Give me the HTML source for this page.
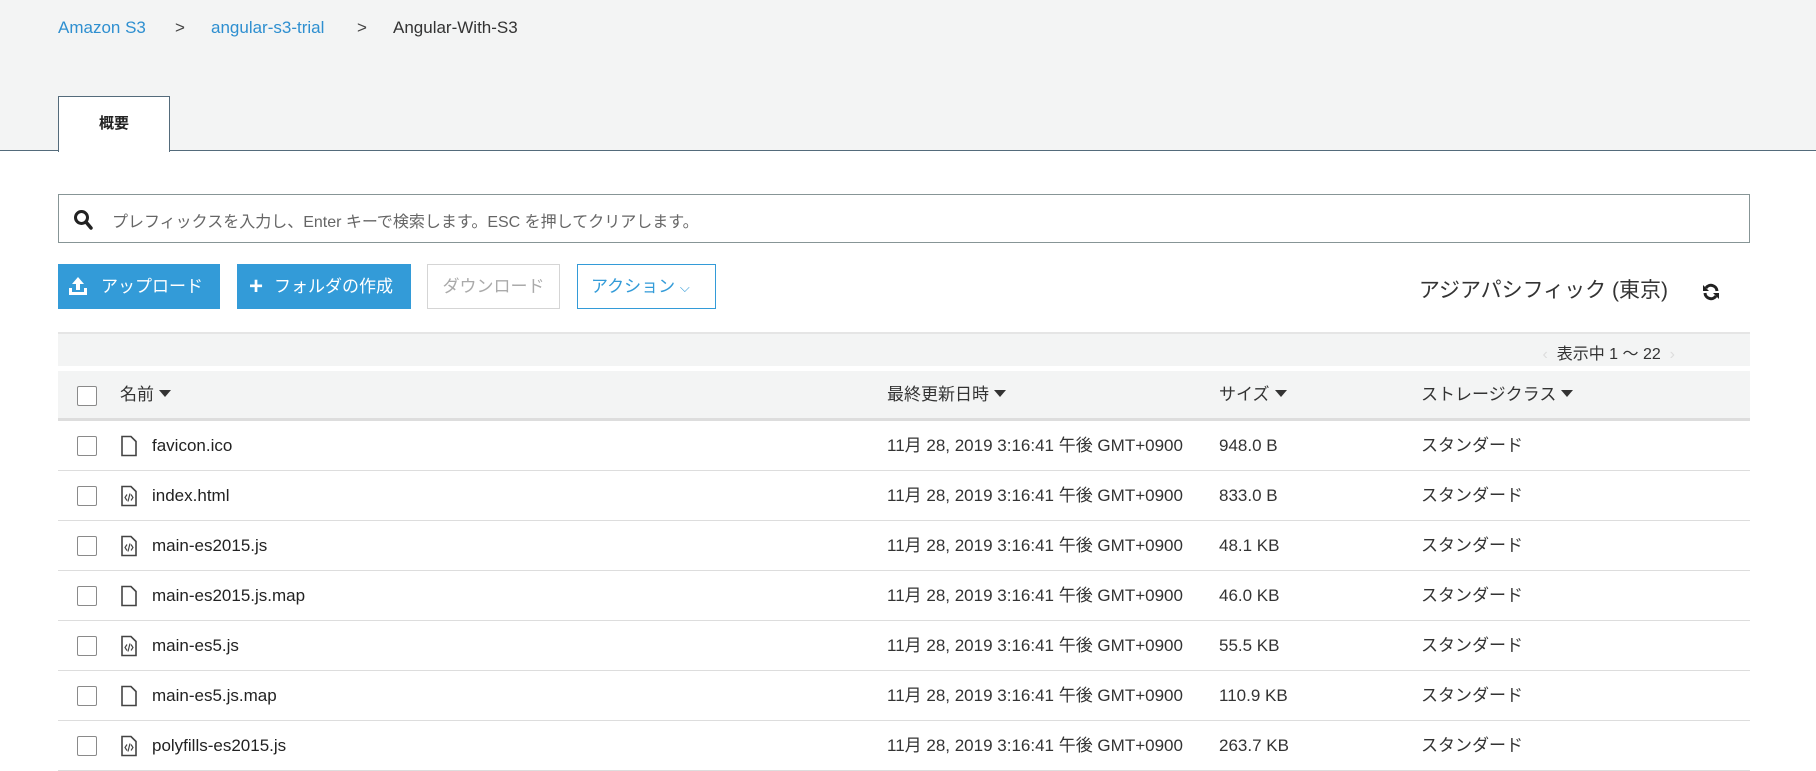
<!DOCTYPE html>
<html><head><meta charset="utf-8"><style>
*{box-sizing:border-box;margin:0;padding:0}
body{width:1816px;height:768px;overflow:hidden;background:#fff;font-family:"Liberation Sans","Noto Sans CJK JP",sans-serif;color:#333;position:relative}
.hdr{position:absolute;left:0;top:0;width:1816px;height:151px;background:#f3f4f4;border-bottom:1px solid #546b7b}
.a{position:absolute;white-space:nowrap}
.bc{font-size:17px;top:18px}
.tab{position:absolute;left:58px;top:96px;width:112px;height:56px;background:#fff;border:1px solid #546b7b;border-bottom:none;font-size:15px;font-weight:bold;text-align:center;line-height:54px;color:#222}
.search{position:absolute;left:58px;top:194px;width:1692px;height:49px;border:1px solid #879596}
.btn{position:absolute;top:264px;height:45px;font-size:17px;line-height:45px;white-space:nowrap}
.blue{background:#339bd8;color:#fff}
.pager{position:absolute;left:58px;top:332px;width:1692px;height:34px;background:#f3f4f4;border-top:2px solid #e5e5e5}
.th{position:absolute;left:58px;top:371px;width:1692px;height:50px;background:#f3f4f4;border-bottom:3px solid #ddd}
.row{position:absolute;left:58px;width:1692px;height:50px;border-bottom:1px solid #ddd;font-size:17px}
.cb{position:absolute;left:19px;top:15px;width:20px;height:20px;border:1px solid #8a8a8a;border-radius:2px;background:#fff}
.row .a{top:14px;line-height:22px;height:22px}
.ti{position:absolute;font-size:17px;top:13px;line-height:22px;height:22px;white-space:nowrap;color:#333}
.tri{display:inline-block;width:0;height:0;border-left:6px solid transparent;border-right:6px solid transparent;border-top:7px solid #333;margin-left:5px;vertical-align:3px}
</style></head><body>
<div class="hdr"></div>
<div class="a bc" style="left:58px;color:#2e8fd0">Amazon S3</div>
<div class="a bc" style="left:175px;color:#444">&gt;</div>
<div class="a bc" style="left:211px;color:#2e8fd0">angular-s3-trial</div>
<div class="a bc" style="left:357px;color:#444">&gt;</div>
<div class="a bc" style="left:393px;color:#333">Angular-With-S3</div>
<div class="tab">概要</div>
<div class="search">
<svg style="position:absolute;left:14px;top:14px" width="20" height="22" viewBox="0 0 20 22"><circle cx="8.5" cy="8.5" r="6" fill="none" stroke="#222" stroke-width="3"/><path d="M13 13l5 6" stroke="#222" stroke-width="3.5" stroke-linecap="round"/></svg>
<div class="a" style="left:53px;top:13px;font-size:16px;color:#666">プレフィックスを入力し、Enter キーで検索します。ESC を押してクリアします。</div>
</div>
<div class="btn blue" style="left:58px;width:162px;padding-left:12px">
<svg style="position:absolute;left:10px;top:12px" width="20" height="20" viewBox="0 0 20 20"><path d="M10 1l6 7h-4v6H8V8H4z" fill="#fff"/><path d="M1 12h3v4h12v-4h3v7H1z" fill="#fff"/></svg><span style="position:absolute;left:43px">アップロード</span></div>
<div class="btn blue" style="left:237px;width:174px"><span style="position:absolute;left:12px;font-size:24px;font-weight:bold">+</span><span style="position:absolute;left:37px">フォルダの作成</span></div>
<div class="btn" style="left:427px;width:133px;border:1px solid #d5d5d5;color:#aaa;text-align:center;line-height:43px">ダウンロード</div>
<div class="btn" style="left:577px;width:139px;border:1px solid #339bd8;color:#339bd8;line-height:43px;padding-left:13px">アクション <span style="font-size:13px">⌵</span></div>
<div class="a" style="right:148px;top:274px;font-size:21px;color:#333">アジアパシフィック (東京)</div>
<svg style="position:absolute;left:1702px;top:283px" width="18" height="18" viewBox="0 0 18 18"><path d="M15 8A6 6 0 0 0 4 5" fill="none" stroke="#222" stroke-width="3"/><path d="M1 2l0 6 6 0z" fill="#222"/><path d="M3 10a6 6 0 0 0 11 3" fill="none" stroke="#222" stroke-width="3"/><path d="M17 16l0-6-6 0z" fill="#222"/></svg>
<div class="pager"><div class="a" style="right:75px;top:6px;font-size:16px;color:#333"><span style="color:#ddd">‹</span>&nbsp; 表示中 1 ～ 22 &nbsp;<span style="color:#ddd">›</span></div></div>
<div class="th"><div class="cb"></div>
<div class="ti" style="left:62px">名前<span class="tri"></span></div>
<div class="ti" style="left:829px">最終更新日時<span class="tri"></span></div>
<div class="ti" style="left:1161px">サイズ<span class="tri"></span></div>
<div class="ti" style="left:1363px">ストレージクラス<span class="tri"></span></div>
</div>
<div id="rows"></div>
<script>
var d=[["favicon.ico",0,"948.0 B"],["index.html",1,"833.0 B"],["main-es2015.js",1,"48.1 KB"],["main-es2015.js.map",0,"46.0 KB"],["main-es5.js",1,"55.5 KB"],["main-es5.js.map",0,"110.9 KB"],["polyfills-es2015.js",1,"263.7 KB"]];
var h="";d.forEach(function(r,i){var t=421+i*50;
var ic=r[1]?'<svg class="a" style="left:63px;top:14px" width="16" height="21" viewBox="0 0 16 21"><path d="M1 1h9l5 5v14H1z" fill="none" stroke="#444" stroke-width="1.6"/><path d="M6 9l-2 3 2 3M10 9l2 3-2 3M9 8l-2 8" fill="none" stroke="#444" stroke-width="1.2"/></svg>':'<svg class="a" style="left:63px;top:14px" width="16" height="21" viewBox="0 0 16 21"><path d="M1 1h9l5 5v14H1z" fill="none" stroke="#444" stroke-width="1.6"/></svg>';
h+='<div class="row" style="top:'+t+'px"><div class="cb"></div>'+ic+'<div class="a" style="left:94px;color:#222">'+r[0]+'</div><div class="a" style="left:829px">11月 28, 2019 3:16:41 午後 GMT+0900</div><div class="a" style="left:1161px">'+r[2]+'</div><div class="a" style="left:1363px">スタンダード</div></div>';});
document.getElementById("rows").innerHTML=h;
</script>
</body></html>
